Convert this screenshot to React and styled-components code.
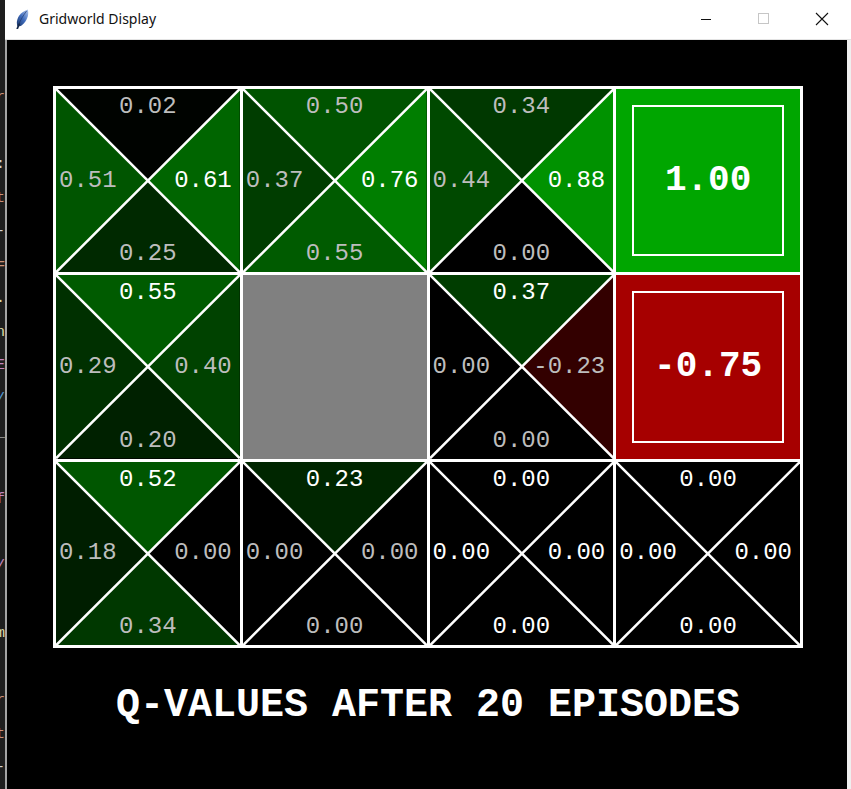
import React from 'react'
import styled, { createGlobalStyle } from 'styled-components'

const MAX_VALUE = 1.0
const MIN_VALUE = -0.75

// same shading rule the gridworld display uses
const valueColor = (v) => {
    if (v > 0) return `rgb(0, ${Math.round((v * 0.65 / MAX_VALUE) * 255)}, 0)`
    if (v < 0) return `rgb(${Math.round((v * 0.65 / MIN_VALUE) * 255)}, 0, 0)`
    return '#000'
}

const fmt = (v) => v.toFixed(2)

const cells = [
    { kind: 'q', q: { n: 0.02, e: 0.61, s: 0.25, w: 0.51 }, best: ['e'] },
    { kind: 'q', q: { n: 0.5, e: 0.76, s: 0.55, w: 0.37 }, best: ['e'] },
    { kind: 'q', q: { n: 0.34, e: 0.88, s: 0.0, w: 0.44 }, best: ['e'] },
    { kind: 'exit', value: 1.0 },
    { kind: 'q', q: { n: 0.55, e: 0.4, s: 0.2, w: 0.29 }, best: ['n'] },
    { kind: 'wall' },
    { kind: 'q', q: { n: 0.37, e: -0.23, s: 0.0, w: 0.0 }, best: ['n'] },
    { kind: 'exit', value: -0.75 },
    { kind: 'q', q: { n: 0.52, e: 0.0, s: 0.34, w: 0.18 }, best: ['n'] },
    { kind: 'q', q: { n: 0.23, e: 0.0, s: 0.0, w: 0.0 }, best: ['n'] },
    { kind: 'q', q: { n: 0.0, e: 0.0, s: 0.0, w: 0.0 }, best: ['n', 'e', 's', 'w'] },
    { kind: 'q', q: { n: 0.0, e: 0.0, s: 0.0, w: 0.0 }, best: ['n', 'e', 's', 'w'] },
]

// slice of the code editor peeking out behind the window
const editorLines = [
    '', '', 'r', '', ':', 't', '-', '=', '.', 'n', 'E', '/', '_', '', 'f', '', '/',
    '', 'm', '', 'r', 't', '-',
]
const editorColors = [
    '#ce9178', '#d4d4d4', '#ce9178', '#9cdcfe', '#d4d4d4', '#ce9178', '#d4d4d4',
    '#ce9178', '#dcdcaa', '#dcdcaa', '#c586c0', '#569cd6', '#d4d4d4', '#d4d4d4',
    '#c586c0', '#d4d4d4', '#c586c0', '#d4d4d4', '#dcdcaa', '#d4d4d4', '#ce9178',
    '#ce9178', '#d4d4d4',
]

const QCell = ({ q, best }) => (
    <Cell>
        <Drawing viewBox="0 0 100 100" preserveAspectRatio="none">
            <polygon points="0,0 100,0 50,50" fill={valueColor(q.n)} />
            <polygon points="100,0 100,100 50,50" fill={valueColor(q.e)} />
            <polygon points="0,100 100,100 50,50" fill={valueColor(q.s)} />
            <polygon points="0,0 0,100 50,50" fill={valueColor(q.w)} />
            <line x1="0" y1="0" x2="100" y2="100" stroke="#fff" strokeWidth="2.5" vectorEffect="non-scaling-stroke" />
            <line x1="100" y1="0" x2="0" y2="100" stroke="#fff" strokeWidth="2.5" vectorEffect="non-scaling-stroke" />
        </Drawing>
        {['n', 'w', 'e', 's'].map((d) => (
            <QLabel key={d} $dir={d} $best={best.includes(d)}>{fmt(q[d])}</QLabel>
        ))}
    </Cell>
)

const App = () => {
    return (
        <>
            <GlobalStyle />
            <Screen>
                <EditorStrip>
                    {editorLines.map((t, i) => (
                        <EditorLine key={i} $color={editorColors[i]}>{t}</EditorLine>
                    ))}
                </EditorStrip>
                <Window>
                    <TitleBar>
                        <AppIcon viewBox="0 0 13 20">
                            <defs>
                                <linearGradient id="feather" x1="0" y1="1" x2="1" y2="0">
                                    <stop offset="0" stopColor="#1b3668" />
                                    <stop offset="0.5" stopColor="#3f6cbd" />
                                    <stop offset="1" stopColor="#b3c9ee" />
                                </linearGradient>
                            </defs>
                            <path d="M1.4 17.6 C-0.6 11 2.6 3.8 11.8 0.4 C13.4 6.4 10.6 13.4 4.8 17 Z" fill="url(#feather)" />
                            <path d="M2.6 15.6 C4.6 11 7.4 6 10.6 2" stroke="#1a3160" strokeWidth="0.6" fill="none" />
                            <path d="M1.3 19.6 L3.2 15.2" stroke="#16294a" strokeWidth="1.7" strokeLinecap="round" />
                        </AppIcon>
                        <Title>Gridworld Display</Title>
                        <Controls>
                            <CaptionButton aria-label="minimize">
                                <svg width="12" height="12" viewBox="0 0 12 12">
                                    <line x1="1" y1="6.5" x2="11" y2="6.5" stroke="#111" strokeWidth="1" />
                                </svg>
                            </CaptionButton>
                            <CaptionButton aria-label="maximize">
                                <svg width="12" height="12" viewBox="0 0 12 12">
                                    <rect x="0.5" y="0.5" width="10" height="10" fill="none" stroke="#c6c6c6" strokeWidth="1" />
                                </svg>
                            </CaptionButton>
                            <CaptionButton aria-label="close">
                                <svg width="14" height="14" viewBox="0 0 14 14">
                                    <path d="M1 1 L13 13 M13 1 L1 13" stroke="#111" strokeWidth="1.1" />
                                </svg>
                            </CaptionButton>
                        </Controls>
                    </TitleBar>
                    <Canvas>
                        <Board>
                            {cells.map((c, i) => {
                                if (c.kind === 'wall') return <Wall key={i} />
                                if (c.kind === 'exit') {
                                    return (
                                        <Exit key={i} $bg={valueColor(c.value)}>
                                            <ExitFrame>{fmt(c.value)}</ExitFrame>
                                        </Exit>
                                    )
                                }
                                return <QCell key={i} q={c.q} best={c.best} />
                            })}
                        </Board>
                        <Caption>Q-VALUES AFTER 20 EPISODES</Caption>
                    </Canvas>
                </Window>
            </Screen>
        </>
    )
}

export default App


const GlobalStyle = createGlobalStyle`
    html, body {
        margin: 0;
        padding: 0;
        background: #1e1e1e;
    }
    * {
        box-sizing: border-box;
    }
`

const Screen = styled.div`
    display: flex;
    width: 851px;
    height: 789px;
    overflow: hidden;
`

const EditorStrip = styled.div`
    width: 5px;
    flex-shrink: 0;
    background: #1e1e1e;
    padding-top: 14px;
    overflow: hidden;
`

const EditorLine = styled.div`
    height: 33.5px;
    line-height: 33.5px;
    margin-left: -4px;
    font-family: "Liberation Mono", monospace;
    font-size: 15px;
    color: ${(p) => p.$color};
    white-space: nowrap;
`

const Window = styled.div`
    flex: 1;
    display: flex;
    flex-direction: column;
    min-width: 0;
`

const TitleBar = styled.div`
    height: 40px;
    flex-shrink: 0;
    display: flex;
    align-items: center;
    padding-left: 11px;
    background: #fff;
    border-bottom: 1px solid #e3e3e3;
`

const AppIcon = styled.svg`
    width: 13px;
    height: 20px;
    margin-top: -2px;
`

const Title = styled.span`
    margin-left: 10px;
    margin-top: -2px;
    font-family: "Noto Sans", "Open Sans", sans-serif;
    font-size: 14px;
    color: #111;
`

const Controls = styled.div`
    margin-left: auto;
    display: flex;
    align-self: stretch;
`

const CaptionButton = styled.div`
    width: 58px;
    display: flex;
    align-items: center;
    justify-content: center;
    padding-bottom: 2px;
`

const Canvas = styled.div`
    flex: 1;
    display: flex;
    flex-direction: column;
    align-items: center;
    padding-top: 46px;
    padding-left: 2px;
    background: #000;
    border-left: 2px solid #a4a4a4;
    border-right: 4px solid #efefef;
`

const Board = styled.div`
    width: 750px;
    height: 562px;
    display: grid;
    grid-template-columns: repeat(4, 1fr);
    grid-template-rows: repeat(3, 1fr);
    gap: 3px;
    padding: 3px;
    background: #fff;
`

const Cell = styled.div`
    display: grid;
    grid-template-areas:
        "n n"
        "w e"
        "s s";
    grid-template-rows: auto 1fr auto;
    grid-template-columns: 1fr 1fr;
    min-width: 0;
    min-height: 0;
    background: #000;
`

const Drawing = styled.svg`
    grid-area: 1 / 1 / -1 / -1;
    display: block;
    width: 100%;
    height: 100%;
`

const labelPlace = {
    n: 'justify-self: center; margin-top: 6px;',
    s: 'justify-self: center; margin-bottom: 6px;',
    w: 'justify-self: start; align-self: center; margin-left: 3px;',
    e: 'justify-self: end; align-self: center; margin-right: 8px;',
}

const QLabel = styled.span`
    grid-area: ${(p) => p.$dir};
    ${(p) => labelPlace[p.$dir]}
    font-family: "Liberation Mono", "DejaVu Sans Mono", monospace;
    font-size: 24px;
    line-height: 24px;
    font-weight: 400;
    color: ${(p) => (p.$best ? '#fff' : '#bdbdbd')};
    white-space: nowrap;
`

const Wall = styled.div`
    background: #808080;
`

const Exit = styled.div`
    display: flex;
    padding: 16px;
    background: ${(p) => p.$bg};
`

const ExitFrame = styled.div`
    flex: 1;
    display: flex;
    align-items: center;
    justify-content: center;
    border: 2px solid #fff;
    font-family: "Liberation Mono", "DejaVu Sans Mono", monospace;
    font-size: 36px;
    font-weight: 700;
    color: #fff;
`

const Caption = styled.div`
    margin-top: 38px;
    font-family: "Liberation Mono", "DejaVu Sans Mono", monospace;
    font-size: 40px;
    line-height: 40px;
    font-weight: 700;
    color: #fff;
    white-space: nowrap;
`
